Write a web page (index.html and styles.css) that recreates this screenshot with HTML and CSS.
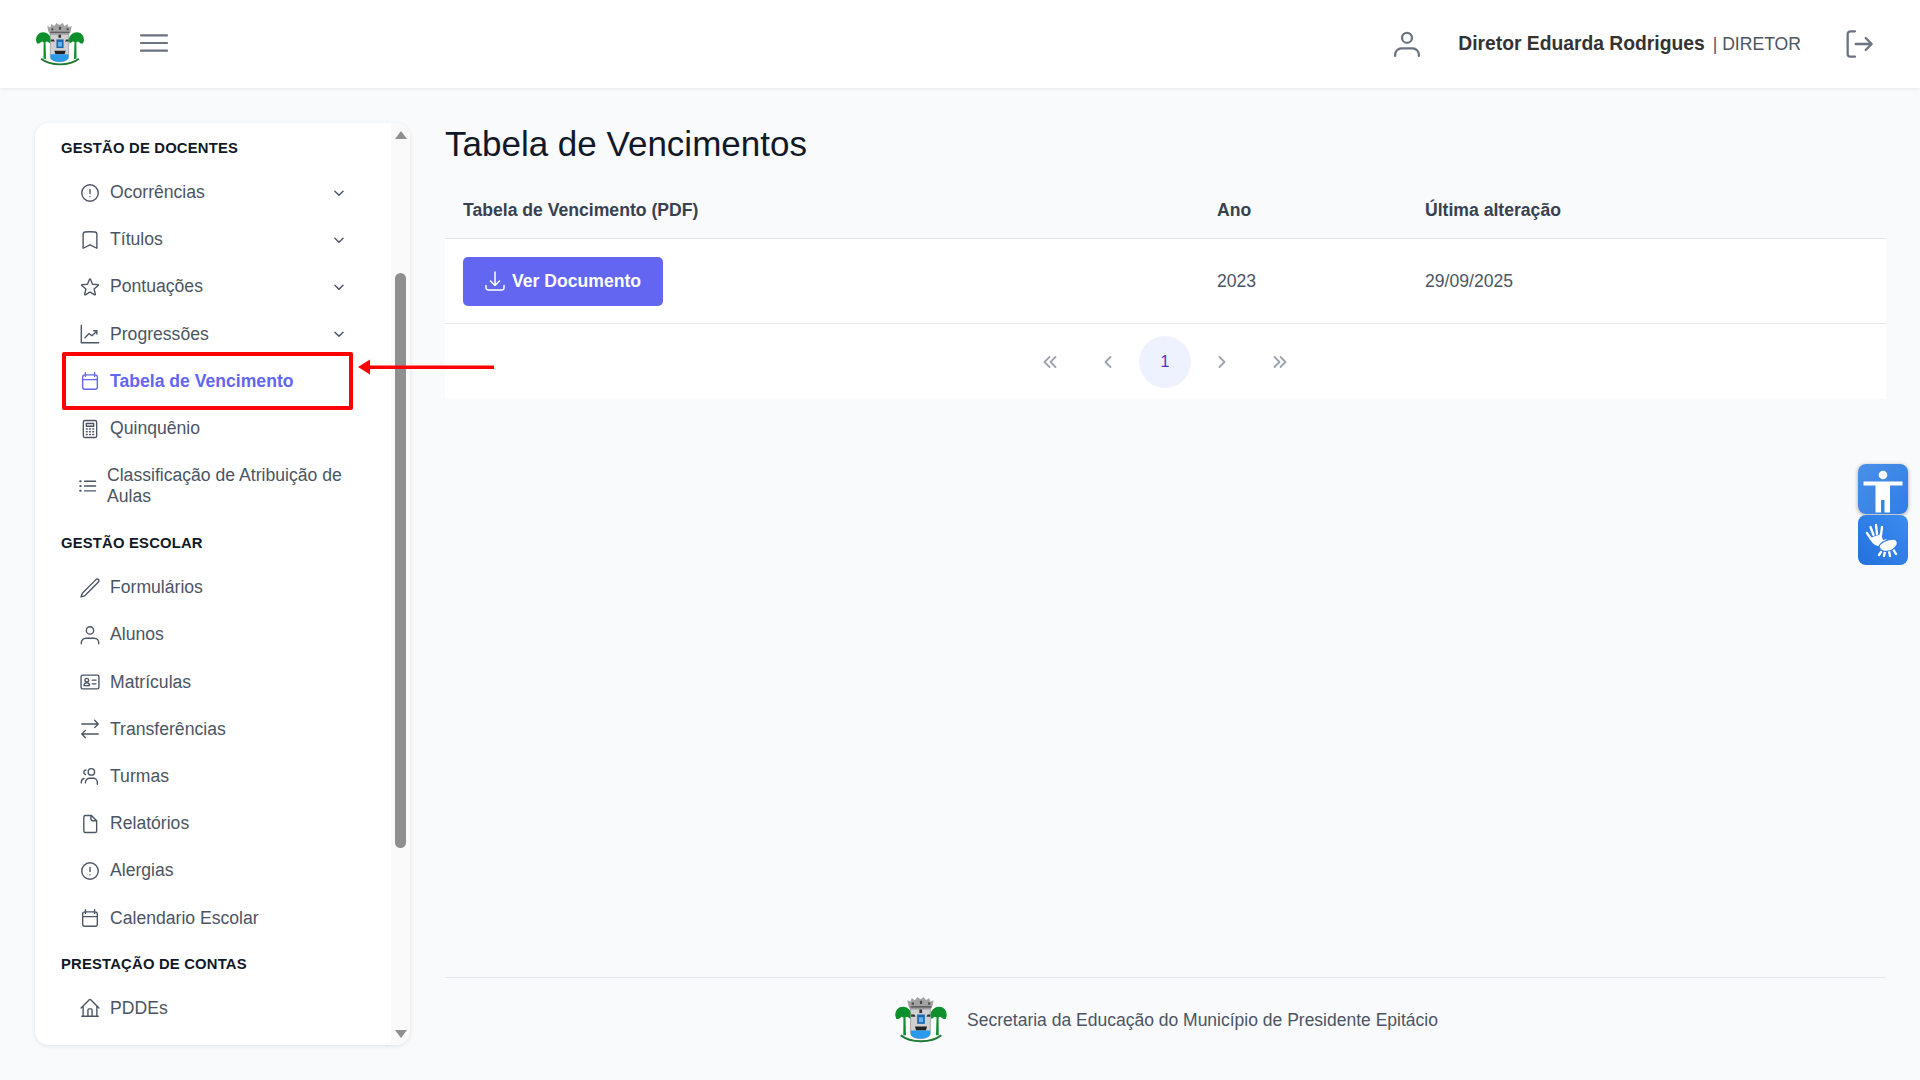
FILE: index.html
```html
<!DOCTYPE html>
<html lang="pt-BR">
<head>
<meta charset="utf-8">
<title>Tabela de Vencimentos</title>
<link rel="stylesheet" href="styles.css">
</head>
<body>
<svg class="sprite" xmlns="http://www.w3.org/2000/svg">
  <symbol id="i-alert" viewBox="0 0 24 24"><path d="M12 8v4.500m9-.5a9 9 0 11-18 0 9 9 0 0118 0zm-9 4h.01"/></symbol>
  <symbol id="i-bookmark" viewBox="0 0 24 24"><path d="M17.593 3.322c1.100.128 1.907 1.077 1.907 2.185V21L12 17.250 4.500 21V5.507c0-1.108.806-2.057 1.907-2.185a48.507 48.507 0 0111.186 0z"/></symbol>
  <symbol id="i-star" viewBox="0 0 24 24"><path d="M11.480 3.499a.562.562 0 011.040 0l2.125 5.111a.563.563 0 00.475.345l5.518.442c.499.040.701.663.321.988l-4.204 3.602a.563.563 0 00-.182.557l1.285 5.385a.562.562 0 01-.84.61l-4.725-2.885a.563.563 0 00-.586 0L6.982 20.540a.562.562 0 01-.84-.61l1.285-5.386a.562.562 0 00-.182-.557l-4.204-3.602a.563.563 0 01.321-.988l5.518-.442a.563.563 0 00.475-.345L11.480 3.500z"/></symbol>
  <symbol id="i-chart" viewBox="0 0 24 24"><path d="M2.500 2.500V21.500H21.500M6.500 16l4.500-4.500 3 2.500 5.500-5M16 8.500h3.500V12"/></symbol>
  <symbol id="i-calendar" viewBox="0 0 24 24"><path d="M7 3v4M17 3v4M4 18.750V7.500A2.250 2.250 0 016.250 5.250h11.500A2.250 2.250 0 0120 7.500v11.250A2.250 2.250 0 0117.750 21H6.250A2.250 2.250 0 014 18.750zM4 10.500h16"/></symbol>
  <symbol id="i-calc" viewBox="0 0 24 24"><path d="M6.500 2.750h11a1.750 1.750 0 011.750 1.750v15a1.750 1.750 0 01-1.750 1.750h-11a1.750 1.750 0 01-1.750-1.750v-15A1.750 1.750 0 016.500 2.750zM8 6h8v3H8zM8 12h1M11.500 12h1M15 12h1M8 15h1M11.500 15h1M15 15h1M8 18h1M11.500 18h1M15 18h1"/></symbol>
  <symbol id="i-list" viewBox="0 0 24 24"><path d="M8.250 6.750h12M8.250 12h12M8.250 17.250h12"/><path class="dots" d="M3.500 6.750h.5M3.500 12h.5M3.500 17.250h.5"/></symbol>
  <symbol id="i-pencil" viewBox="0 0 24 24"><path d="M16.862 4.487l1.687-1.688a1.875 1.875 0 112.652 2.652L6.832 19.820a4.500 4.500 0 01-1.897 1.130l-2.685.8.8-2.685a4.500 4.500 0 011.130-1.897L16.863 4.487z"/></symbol>
  <symbol id="i-user" viewBox="0 0 24 24"><circle cx="12" cy="7" r="4"/><path d="M2.500 21.500v-1a5 5 0 015-5h9a5 5 0 015 5v1"/></symbol>
  <symbol id="i-id" viewBox="0 0 24 24"><path d="M4 4.500h16a1.750 1.750 0 011.750 1.750v11.500A1.750 1.750 0 0120 19.500H4a1.750 1.750 0 01-1.750-1.750V6.250A1.750 1.750 0 014 4.500zM14.500 10h4M14.500 14h4"/><circle cx="8.500" cy="10" r="2"/><path d="M5.500 16a3 3 0 016 0z"/></symbol>
  <symbol id="i-swap" viewBox="0 0 24 24"><path d="M7 21.500L3 17.500l4-4M3 17.500h18M17 2.500l4 4-4 4M21 6.500H3"/></symbol>
  <symbol id="i-users" viewBox="0 0 24 24"><circle cx="13.500" cy="7.500" r="3.500"/><path d="M7 19.500v-.5a4.500 4.500 0 014.500-4.500h4a4.500 4.500 0 014.500 4.500v2M7.500 5.500a2.500 2.500 0 00-.5 4.900M2.500 19.500v-1a4 4 0 013-3.800"/></symbol>
  <symbol id="i-doc" viewBox="0 0 24 24"><path d="M7 2.750h6.500l5.750 5.750v11a1.750 1.750 0 01-1.750 1.750H7a1.750 1.750 0 01-1.750-1.750v-15A1.750 1.750 0 017 2.750zM13 2.750v3.500a2.250 2.250 0 002.250 2.250h4"/></symbol>
  <symbol id="i-home" viewBox="0 0 24 24"><path d="M2.250 12l8.954-8.955c.44-.439 1.152-.439 1.591 0L21.750 12M4.500 9.750v10.125c0 .621.504 1.125 1.125 1.125H9.750v-6.875c0-.621.504-1.125 1.125-1.125h2.250c.621 0 1.125.504 1.125 1.125V21h4.125c.621 0 1.125-.504 1.125-1.125V9.750M3 21h18"/></symbol>
  <symbol id="i-chev" viewBox="0 0 24 24"><path d="M5 9l7 7 7-7"/></symbol>
  <symbol id="i-download" viewBox="0 0 24 24"><path d="M3 16.500v2.250A2.250 2.250 0 005.250 21h13.500A2.250 2.250 0 0021 18.750V16.500M16.500 12L12 16.500m0 0L7.500 12m4.500 4.500V3"/></symbol>
  <symbol id="i-logout" viewBox="0 0 24 24"><path d="M9 2.500H5.500a2 2 0 00-2 2v15a2 2 0 002 2H9M9.500 12h12M17 7.500l4.500 4.500-4.500 4.500"/></symbol>
  <symbol id="i-menu" viewBox="0 0 28 28"><path d="M1 6.300h26M1 14h26M1 21.700h26"/></symbol>
  <symbol id="i-p-first" viewBox="0 0 16 16"><path d="M7.500 3L2.500 8l5 5M13.500 3L8.500 8l5 5"/></symbol>
  <symbol id="i-p-prev" viewBox="0 0 16 16"><path d="M10.500 3L5.500 8l5 5"/></symbol>
  <symbol id="i-p-next" viewBox="0 0 16 16"><path d="M5.500 3l5 5-5 5"/></symbol>
  <symbol id="i-p-last" viewBox="0 0 16 16"><path d="M2.500 3l5 5-5 5M8.500 3l5 5-5 5"/></symbol>
  <symbol id="crest" viewBox="0 0 47 42">
    <path fill="#a3a3a3" d="M11 3l3 1 1-3 3 2 2-3 3 2 3-2 2 3 3-2 1 3 3-1-1 5-2 4H14l-2-4z"/>
    <path fill="#4a4a4a" d="M15 5h2v2h-2zM22.500 3.500h2v3h-2zM30 5h2v2h-2zM14 8.500h19v1H14z"/>
    <path fill="#0d8f2b" d="M0 17c0-5 3-8 7-8s7 3 8 7l-1 4-3-2-3 1-2-1-3 2-2 0z"/>
    <path fill="#0d8f2b" d="M47 17c0-5-3-8-7-8s-7 3-8 7l1 4 3-2 3 1 2-1 3 2 2 0z"/>
    <path fill="#0d8f2b" d="M7.500 18h1.800l.5 17H7.300zM37.700 18h1.800l.2 17h-2.500z"/>
    <path fill="#d0d0d0" stroke="#8a8a8a" stroke-width=".6" d="M14 11h18v22c0 3-4 5-9 5s-9-2-9-5z"/>
    <path fill="#333" d="M22 11.500h2.500v3H22zM14.500 16h3l1 2h-4zM28.500 18l1-2h2.500v2z"/>
    <path fill="#1a66b0" d="M20 16h7v8.500h-7z"/>
    <path fill="#62b4ea" d="M21.500 18.500h4v4.500h-4z"/>
    <path fill="#222" d="M18 27h11l-1 3.500H19z"/>
    <path fill="#2a9bea" d="M14.200 30.500h17.600v3c0 2.500-4 4.500-8.800 4.500s-8.800-2-8.800-4.500z"/>
    <path fill="none" stroke="#1c7a35" stroke-width="1.800" d="M5 35c5 4 11 5.500 18.500 5.500S37 39 42 35"/>
  </symbol>
</svg>

<header class="topbar">
  <div class="top-left">
    <svg class="logo"><use href="#crest"/></svg>
    <svg class="menu-btn ico"><use href="#i-menu"/></svg>
  </div>
  <div class="top-right">
    <svg class="top-user ico"><use href="#i-user"/></svg>
    <span class="user-name">Diretor Eduarda Rodrigues</span>
    <span class="user-role">| DIRETOR</span>
    <svg class="top-logout ico"><use href="#i-logout"/></svg>
  </div>
</header>

<div class="layout">
  <aside class="sidebar">
    <nav class="nav">
      <h2 class="nav-label first">GESTÃO DE DOCENTES</h2>
      <a class="nav-item"><svg class="ico nav-ico"><use href="#i-alert"/></svg><span class="nav-text">Ocorrências</span><svg class="ico chev"><use href="#i-chev"/></svg></a>
      <a class="nav-item"><svg class="ico nav-ico"><use href="#i-bookmark"/></svg><span class="nav-text">Títulos</span><svg class="ico chev"><use href="#i-chev"/></svg></a>
      <a class="nav-item"><svg class="ico nav-ico"><use href="#i-star"/></svg><span class="nav-text">Pontuações</span><svg class="ico chev"><use href="#i-chev"/></svg></a>
      <a class="nav-item"><svg class="ico nav-ico"><use href="#i-chart"/></svg><span class="nav-text">Progressões</span><svg class="ico chev"><use href="#i-chev"/></svg></a>
      <a class="nav-item active"><svg class="ico nav-ico"><use href="#i-calendar"/></svg><span class="nav-text">Tabela de Vencimento</span></a>
      <a class="nav-item"><svg class="ico nav-ico"><use href="#i-calc"/></svg><span class="nav-text">Quinquênio</span></a>
      <a class="nav-item tall"><svg class="ico nav-ico"><use href="#i-list"/></svg><span class="nav-text">Classificação de Atribuição de Aulas</span></a>
      <h2 class="nav-label">GESTÃO ESCOLAR</h2>
      <a class="nav-item"><svg class="ico nav-ico"><use href="#i-pencil"/></svg><span class="nav-text">Formulários</span></a>
      <a class="nav-item"><svg class="ico nav-ico"><use href="#i-user"/></svg><span class="nav-text">Alunos</span></a>
      <a class="nav-item"><svg class="ico nav-ico"><use href="#i-id"/></svg><span class="nav-text">Matrículas</span></a>
      <a class="nav-item"><svg class="ico nav-ico"><use href="#i-swap"/></svg><span class="nav-text">Transferências</span></a>
      <a class="nav-item"><svg class="ico nav-ico"><use href="#i-users"/></svg><span class="nav-text">Turmas</span></a>
      <a class="nav-item"><svg class="ico nav-ico"><use href="#i-doc"/></svg><span class="nav-text">Relatórios</span></a>
      <a class="nav-item"><svg class="ico nav-ico"><use href="#i-alert"/></svg><span class="nav-text">Alergias</span></a>
      <a class="nav-item"><svg class="ico nav-ico"><use href="#i-calendar"/></svg><span class="nav-text">Calendario Escolar</span></a>
      <h2 class="nav-label">PRESTAÇÃO DE CONTAS</h2>
      <a class="nav-item"><svg class="ico nav-ico"><use href="#i-home"/></svg><span class="nav-text">PDDEs</span></a>
    </nav>
    <div class="scrollbar">
      <span class="sb-up"></span>
      <span class="sb-thumb"></span>
      <span class="sb-down"></span>
    </div>
  </aside>

  <main class="content">
    <h1 class="page-title">Tabela de Vencimentos</h1>
    <table class="table">
      <thead>
        <tr><th class="col-doc">Tabela de Vencimento (PDF)</th><th class="col-year">Ano</th><th>Última alteração</th></tr>
      </thead>
      <tbody>
        <tr>
          <td><a class="btn"><svg class="ico btn-ico"><use href="#i-download"/></svg>Ver Documento</a></td>
          <td>2023</td>
          <td>29/09/2025</td>
        </tr>
      </tbody>
    </table>
    <div class="pager">
      <svg class="ico pg-ico"><use href="#i-p-first"/></svg>
      <svg class="ico pg-ico"><use href="#i-p-prev"/></svg>
      <span class="pg-current">1</span>
      <svg class="ico pg-ico"><use href="#i-p-next"/></svg>
      <svg class="ico pg-ico"><use href="#i-p-last"/></svg>
    </div>
    <footer class="footer">
      <svg class="footer-logo"><use href="#crest"/></svg>
      <span class="footer-text">Secretaria da Educação do Município de Presidente Epitácio</span>
    </footer>
  </main>
</div>

<div class="a11y">
  <div class="a11y-btn">
    <svg viewBox="0 0 50 50"><circle cx="25" cy="11" r="4.300" fill="#fff"/><path fill="#fff" d="M5.500 17.500h39v4H32v27h-5.500V36h-3.500v12.500H17.500v-27h-12z"/></svg>
  </div>
  <div class="a11y-btn second">
    <svg viewBox="0 0 50 50">
      <g fill="none" stroke="#fff" stroke-linecap="round" stroke-width="2.300"><path d="M13 24l-4-6M15.500 20l-3-8M19 19l-1-9M23 20l1-8"/><path d="M23 37l-2 3M27 36l-1 5M31 36l1 5M35 34l3 5"/></g>
      <path fill="#fff" d="M12 23l11-4 2 6 4-1-6 7c-5 1-10-3-11-8z"/>
      <path fill="#fff" stroke="#2b78e4" stroke-width="1.200" d="M21 31c2-3 5-5 9-6l5-1c4 0 5 3 4 6-2 3-5 6-9 6-4 1-8 0-9-5z"/>
    </svg>
  </div>
</div>

<div class="note-box"></div>
<svg class="note-arrow" viewBox="0 0 136 18"><path fill="#f00" d="M0 9L12 1.500v6H136v3.500H12v5.500z"/></svg>
</body>
</html>
```

FILE: styles.css
```css
* { box-sizing: border-box; }
html, body { height: 100%; }
body {
  margin: 0;
  background: #f9fafb;
  font-family: "Liberation Sans", Arial, sans-serif;
  font-size: 17.6px;
  color: #4b5563;
  display: flex;
  flex-direction: column;
  overflow: hidden;
}
.sprite { position: absolute; width: 0; height: 0; }
.ico { fill: none; stroke: currentColor; stroke-width: 1.5; stroke-linecap: round; stroke-linejoin: round; flex: none; }

.topbar {
  height: 88px;
  flex: none;
  background: #fff;
  box-shadow: 0 1px 3px rgba(0, 0, 0, .08);
  display: flex;
  align-items: center;
  justify-content: space-between;
  padding: 0 45px 0 36px;
}
.top-left { display: flex; align-items: center; gap: 56px; }
.logo { width: 48px; height: 43px; }
.menu-btn { width: 28px; height: 28px; color: #6b7280; stroke-width: 2.2; margin-bottom: 2px; }
.top-right { display: flex; align-items: center; }
.top-user { width: 30px; height: 30px; color: #6b7280; margin-right: 36px; stroke-width: 1.8; }
.user-name { font-weight: 700; color: #333; font-size: 19.3px; }
.user-role { color: #4b5563; margin-left: 8px; }
.top-logout { width: 32px; height: 32px; color: #6b7280; margin-left: 42px; stroke-width: 1.7; }

.layout { flex: 1; min-height: 0; display: flex; padding: 35px 34px 35px 35px; gap: 35px; }

.sidebar {
  width: 375px;
  flex: none;
  background: #fff;
  border-radius: 14px;
  box-shadow: 0 1px 4px rgba(0, 0, 0, .1);
  display: flex;
  overflow: hidden;
}
.nav { flex: 1; padding: 14px 0 0 27px; }
.nav-label {
  margin: 11px 0 10px -1px;
  font-size: 14.8px;
  line-height: 22px;
  font-weight: 700;
  color: #111827;
  letter-spacing: .2px;
}
.nav-label.first { margin-top: 0; }
.nav-item { height: 47.2px; display: flex; align-items: center; padding: 0 45px 0 16px; gap: 8px; }
.nav-item .nav-ico { margin: 0 1px; }
.nav-item.tall { height: 69px; padding: 0 27px 2px 15px; gap: 8px; }
.nav-item.tall .nav-ico { margin: 0; }
.dots { stroke-width: 2.2; }
.nav-text { flex: 1; line-height: 21px; }
.nav-ico { width: 22px; height: 22px; }
.chev { width: 14px; height: 14px; stroke-width: 2.4; color: #4b5563; }
.nav-item.active { color: #6366f1; font-weight: 700; }

.scrollbar { width: 19px; flex: none; background: #fafafa; display: flex; flex-direction: column; align-items: center; padding-top: 8px; }
.sb-up { width: 0; height: 0; border: 6.5px solid transparent; border-top: 0; border-bottom: 8px solid #8f8f8f; }
.sb-thumb { width: 11px; height: 575px; margin-top: 134px; background: #8f8f8f; border-radius: 5.5px; margin-left: -1px; }
.sb-down { width: 0; height: 0; margin-top: auto; margin-bottom: 7px; border: 6.5px solid transparent; border-bottom: 0; border-top: 8px solid #8f8f8f; }

.content { flex: 1; min-width: 0; display: flex; flex-direction: column; }
.page-title { margin: 0; font-size: 35px; font-weight: 400; line-height: 42px; color: #111827; height: 67px; }

.table { width: 100%; border-collapse: collapse; }
.table th { height: 48px; text-align: left; font-weight: 700; color: #374151; padding: 0 18px 7px; border-bottom: 1.5px solid #e5e7eb; }
.table td { height: 85px; background: #fff; padding: 1px 18px 0; border-bottom: 1.5px solid #e5e7eb; }
.col-doc { width: 754px; }
.col-year { width: 208px; }
.btn { display: inline-flex; align-items: center; height: 49px; padding: 0 22px 0 20px; gap: 5px; border-radius: 5px; background: #6366f1; color: #fff; font-weight: 700; }
.btn-ico { width: 24px; height: 24px; }

.pager { height: 75px; background: #fff; display: flex; align-items: center; justify-content: center; gap: 32px; padding: 1px 1px 0 0; }
.pg-ico { width: 16px; height: 16px; color: #9ca3af; margin: 0 5px; stroke-width: 1.8; }
.pg-current { width: 52px; height: 52px; border-radius: 50%; background: #eef2ff; color: #4338ca; display: flex; align-items: center; justify-content: center; font-size: 16px; margin: 0 -14px; }

.footer { margin-top: auto; height: 68px; border-top: 1px solid #e5e7eb; display: flex; align-items: center; justify-content: center; gap: 20px; padding: 17px 0 0 2px; font-size: 17.5px; }
.footer-logo { width: 52px; height: 46px; }

.a11y { position: fixed; left: 1858px; top: 464px; display: flex; flex-direction: column; gap: 1px; }
.a11y-btn { width: 50px; height: 50px; border-radius: 8px; background: linear-gradient(135deg, #4a90e8, #2f7de6); box-shadow: 0 1px 4px rgba(0, 0, 0, .35); }
.a11y-btn.second { box-shadow: none; background: linear-gradient(45deg, #2470dc, #3b8cf0); }
.a11y-btn svg { display: block; width: 50px; height: 50px; }

.note-box { position: absolute; left: 62px; top: 352px; width: 291px; height: 58px; border: 4px solid #f00; border-radius: 2px; }
.note-arrow { position: absolute; left: 358px; top: 358px; width: 136px; height: 18px; }
```
